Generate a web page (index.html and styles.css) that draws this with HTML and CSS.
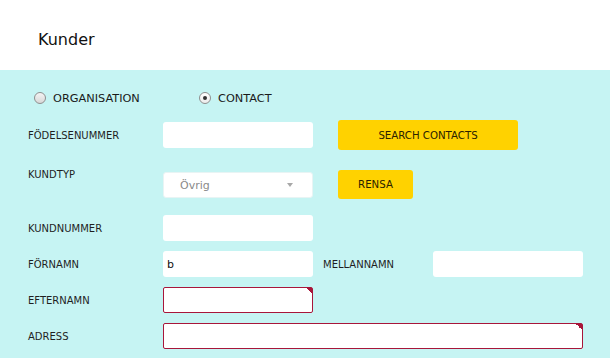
FILE: index.html
```html
<!DOCTYPE html>
<html lang="sv">
<head>
  <meta charset="UTF-8">
  <meta name="viewport" content="width=device-width, initial-scale=1.0">
  <title>Kunder</title>
  <link rel="stylesheet" href="styles.css">
</head>
<body>

<div class="header">
  <h1 class="title">Kunder</h1>
</div>

<div class="content">
  <div class="radio-row">
    <label class="radio"><span class="radio-dot"></span>ORGANISATION</label>
    <label class="radio"><span class="radio-dot checked"></span>CONTACT</label>
  </div>

  <div class="form">
    <div class="row row-first">
      <span class="label">FÖDELSENUMMER</span>
      <input class="field" type="text">
      <button class="btn btn-search">SEARCH CONTACTS</button>
    </div>

    <div class="row row-type">
      <span class="label label-top">KUNDTYP</span>
      <div class="select">
        <span class="select-text">Övrig</span>
        <span class="select-arrow"></span>
      </div>
      <button class="btn btn-clear">RENSA</button>
    </div>

    <div class="row row-number">
      <span class="label">KUNDNUMMER</span>
      <input class="field" type="text">
    </div>

    <div class="row">
      <span class="label">FÖRNAMN</span>
      <input class="field" type="text" value="b">
      <span class="label label-mid">MELLANNAMN</span>
      <input class="field" type="text">
    </div>

    <div class="row">
      <span class="label">EFTERNAMN</span>
      <input class="field required" type="text">
    </div>

    <div class="row">
      <span class="label">ADRESS</span>
      <input class="field field-wide required" type="text">
    </div>
  </div>
</div>

</body>
</html>
```

FILE: styles.css
```css
body {
  margin: 0;
  font-family: "DejaVu Sans", Verdana, sans-serif;
  background-color: #c6f4f3;
  color: #1c1c1c;
}

.header {
  background-color: #fff;
  height: 70px;
  box-sizing: border-box;
  padding: 30px 0 0 38px;
}

.title {
  margin: 0;
  font-size: 16px;
  font-weight: normal;
  line-height: 19px;
  color: #111;
}

.content {
  padding: 22px 0 0 28px;
}

/* radio buttons */
.radio-row {
  display: flex;
  padding-left: 6px;
  height: 12px;
}

.radio {
  display: flex;
  align-items: center;
  width: 165px;
  font-size: 11.3px;
  color: #1a1a1a;
}

.radio-dot {
  width: 10px;
  height: 10px;
  border: 1px solid #8f8f8f;
  border-radius: 50%;
  background: linear-gradient(#f4f4f4, #d8d8d8);
  margin-right: 7px;
  position: relative;
}

.radio-dot.checked {
  background: linear-gradient(#fff, #ececec);
}

.radio-dot.checked::after {
  content: "";
  position: absolute;
  left: 3px;
  top: 3px;
  width: 4px;
  height: 4px;
  border-radius: 50%;
  background: #333;
}

/* form rows */
.form {
  margin-top: 16px;
}

.row {
  display: flex;
  align-items: center;
  margin-top: 10px;
}

.row-first {
  margin-top: 0;
  height: 30px;
}

.row-type {
  margin-top: 20px;
  height: 30px;
  align-items: flex-start;
}

.row-number {
  margin-top: 15px;
}

.label {
  flex: 0 0 135px;
  font-size: 10px;
  color: #1f1f1f;
}

.label-top {
  line-height: 10px;
}

.label-mid {
  flex: 0 0 110px;
  margin-left: 10px;
}

.field {
  width: 150px;
  height: 26px;
  box-sizing: border-box;
  border: none;
  border-radius: 3px;
  background-color: #fff;
  padding: 0 4px;
  font-family: "DejaVu Sans", Verdana, sans-serif;
  font-size: 11px;
  color: #111;
  outline: none;
}

.field-wide {
  width: 420px;
}

.required {
  border: 1px solid #a8163a;
  border-radius: 2px;
  background: linear-gradient(to bottom left, #a8163a 50%, transparent 50%) top right / 6px 6px no-repeat, #fff;
}

/* select */
.select {
  width: 150px;
  height: 26px;
  margin-top: 2px;
  box-sizing: border-box;
  display: flex;
  align-items: center;
  justify-content: space-between;
  background-color: #fff;
  border: 1px solid #e8f4f4;
  border-radius: 3px;
  padding: 0 19px 0 16px;
}

.select-text {
  font-size: 11px;
  color: #8a8a8a;
}

.select-arrow {
  width: 0;
  height: 0;
  border-left: 3px solid transparent;
  border-right: 3px solid transparent;
  border-top: 4px solid #a8a8a8;
}

/* buttons */
.btn {
  margin-left: 25px;
  height: 30px;
  border: none;
  border-radius: 3px;
  background-color: #ffd200;
  font-family: "DejaVu Sans", Verdana, sans-serif;
  font-size: 10.2px;
  color: #2a2200;
  cursor: pointer;
  padding: 0;
}

.btn-search {
  width: 180px;
}

.btn-clear {
  width: 75px;
  height: 29px;
}
```
